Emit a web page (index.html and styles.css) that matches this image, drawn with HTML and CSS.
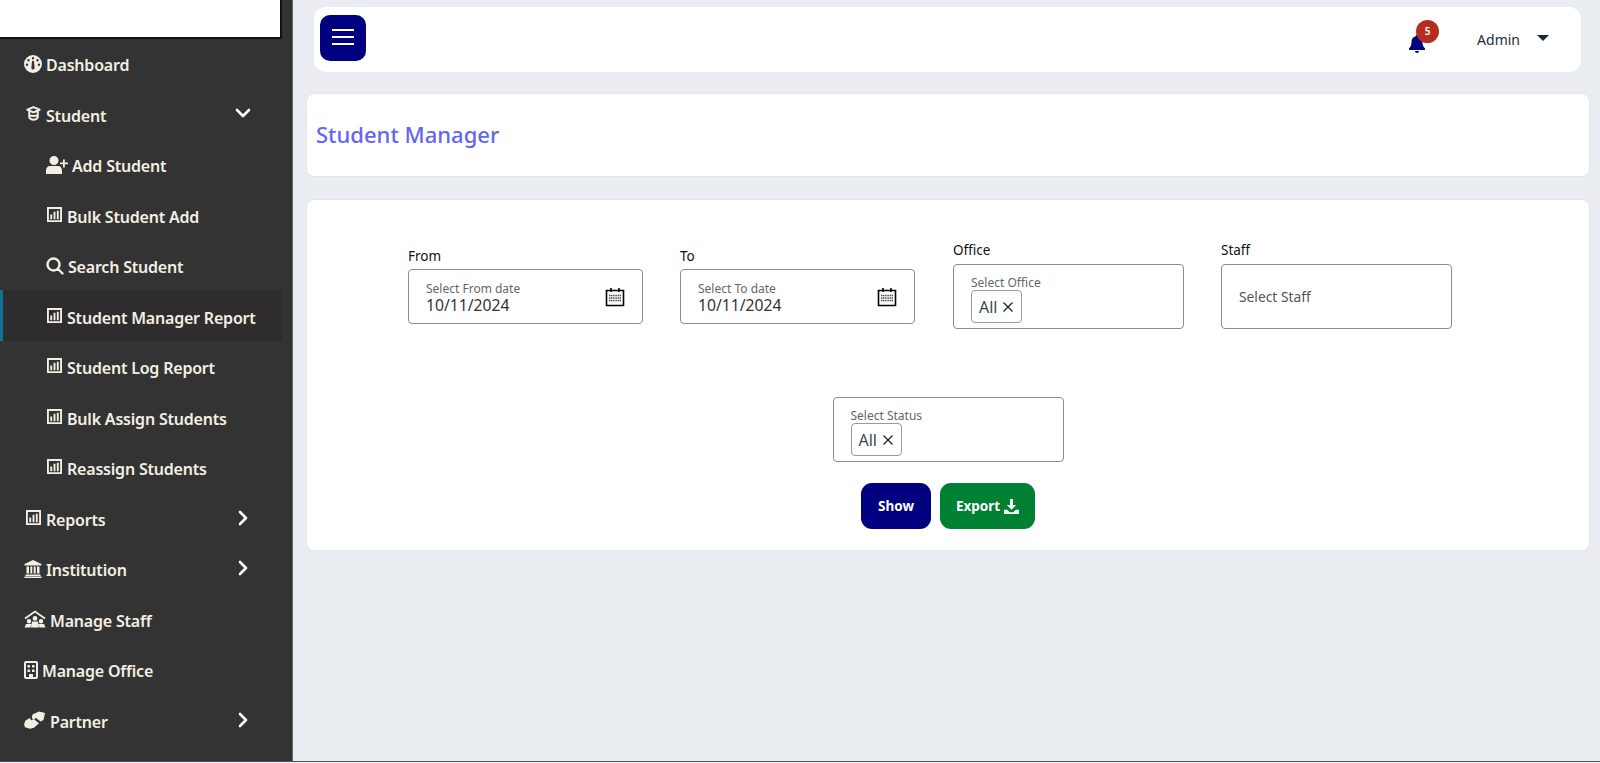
FILE: index.html
```html
<!DOCTYPE html>
<html lang="en">
<head>
    <meta charset="UTF-8">
    <title>Student Manager</title>
    <link rel="stylesheet" href="styles.css">
</head>
<body>
<svg class="defs" width="0" height="0">
    <symbol id="chart" viewBox="0 0 16 16">
        <path fill="currentColor" fill-rule="evenodd" d="M0 0h16v16H0zM2 2v12h12V2z"/>
        <path fill="currentColor" d="M3.5 8h2v5h-2zM7 5h2v8H7zM10.5 4h2v9h-2z"/>
    </symbol>
    <symbol id="right" viewBox="0 0 12 16">
        <path fill="none" stroke="currentColor" stroke-width="2.6" stroke-linecap="round" stroke-linejoin="round" d="M3 2l6 6-6 6"/>
    </symbol>
    <symbol id="calendar" viewBox="0 0 20 20">
        <path fill="none" stroke="#000" stroke-width="1.6" d="M1.5 3.5h17v15h-17zM6 1v4M14 1v4"/>
        <path fill="none" stroke="#444" stroke-width="1.7" stroke-dasharray="1.2 .6" d="M4 8.500h12M4 11h12M4 13.500h12"/>
    </symbol>
    <symbol id="close" viewBox="0 0 12 12">
        <path fill="none" stroke="#222" stroke-width="1.3" d="M1.500 1.500l9 9M10.500 1.500l-9 9"/>
    </symbol>
</svg>

<div class="layout">
    <aside class="sidebar">
        <div class="logo"></div>
        <nav class="menu">
            <a class="item">
                <svg class="icon icon-lg" viewBox="0 0 18 18"><path fill="currentColor" fill-rule="evenodd" d="M9 0a9 9 0 1 1 0 18A9 9 0 0 1 9 0zM8 6l-.6 7a1.600 1.600 0 1 0 3.200 0L10 6zM4.500 4a1.200 1.200 0 1 0 0 2.400 1.200 1.200 0 0 0 0-2.400zM9 2a1.200 1.200 0 1 0 0 2.400 1.200 1.200 0 0 0 0-2.400zM13.500 4a1.200 1.200 0 1 0 0 2.400 1.200 1.200 0 0 0 0-2.400zM3 8.500a1.200 1.200 0 1 0 0 2.400 1.200 1.200 0 0 0 0-2.400zM15 8.500a1.200 1.200 0 1 0 0 2.400 1.200 1.200 0 0 0 0-2.400z"/></svg>
                <span>Dashboard</span>
            </a>
            <a class="item">
                <svg class="icon icon-cap" viewBox="0 0 14 14"><path fill="none" stroke="currentColor" stroke-width="1.800" stroke-linejoin="round" d="M7 1L1.200 3.500 7 6l5.800-2.500zM3 5v5.500c0 1 2 2.300 4 2.300s4-1.300 4-2.300V5M3 8.500c2 1 6 1 8 0"/></svg>
                <span>Student</span>
                <svg class="chevron chevron-down" viewBox="0 0 16 12"><path fill="none" stroke="currentColor" stroke-width="2.600" stroke-linecap="round" stroke-linejoin="round" d="M2 3l6 6 6-6"/></svg>
            </a>
            <a class="item sub">
                <svg class="icon icon-add" viewBox="0 0 22 18"><path fill="currentColor" d="M8 0a4.500 4.500 0 1 1 0 9 4.500 4.500 0 0 1 0-9zM4 10h8c2.500 0 4 2 4 4.500V18H0v-3.500C0 12 1.500 10 4 10zM17 3.500h1.800V6.500H22v1.800h-3.200v3.200H17V8.300h-3V6.500h3z"/></svg>
                <span>Add Student</span>
            </a>
            <a class="item sub">
                <svg class="icon icon-chart"><use href="#chart"/></svg>
                <span>Bulk Student Add</span>
            </a>
            <a class="item sub">
                <svg class="icon icon-search" viewBox="0 0 18 18"><path fill="none" stroke="currentColor" stroke-width="2.400" stroke-linecap="round" d="M7.500 1.500a6 6 0 1 1 0 12 6 6 0 0 1 0-12zM12 12l4.500 4.500"/></svg>
                <span>Search Student</span>
            </a>
            <a class="item sub active">
                <svg class="icon icon-chart"><use href="#chart"/></svg>
                <span>Student Manager Report</span>
            </a>
            <a class="item sub">
                <svg class="icon icon-chart"><use href="#chart"/></svg>
                <span>Student Log Report</span>
            </a>
            <a class="item sub">
                <svg class="icon icon-chart"><use href="#chart"/></svg>
                <span>Bulk Assign Students</span>
            </a>
            <a class="item sub">
                <svg class="icon icon-chart"><use href="#chart"/></svg>
                <span>Reassign Students</span>
            </a>
            <a class="item">
                <svg class="icon icon-chart"><use href="#chart"/></svg>
                <span>Reports</span>
                <svg class="chevron"><use href="#right"/></svg>
            </a>
            <a class="item">
                <svg class="icon icon-lg" viewBox="0 0 18 18"><path fill="currentColor" d="M9 0l8.500 4v1.500H.5V4zM2.500 6.500h2.500v7H2.500zM6.300 6.500h2v7h-2zM9.700 6.500h2v7h-2zM13 6.500h2.500v7H13zM1.500 14.500h15V16h-15zM.5 16.500h17V18H.5z"/></svg>
                <span>Institution</span>
                <svg class="chevron"><use href="#right"/></svg>
            </a>
            <a class="item">
                <svg class="icon icon-staff" viewBox="0 0 22 18"><path fill="none" stroke="currentColor" stroke-width="1.800" d="M1 8.500L11 1.500l10 7"/><path fill="currentColor" d="M11 6a2.400 2.400 0 1 1 0 4.800A2.400 2.400 0 0 1 11 6zM8 11.500h6l1 6H7zM5 9a2.200 2.200 0 1 1 0 4.400A2.200 2.200 0 0 1 5 9zM2 14h5.500l-1 3.500H.5zM17 9a2.200 2.200 0 1 1 0 4.400 2.200 2.200 0 0 1 0-4.400zM14.500 14H20l1.500 3.500h-6z"/></svg>
                <span>Manage Staff</span>
            </a>
            <a class="item">
                <svg class="icon icon-office" viewBox="0 0 14 18"><path fill="currentColor" fill-rule="evenodd" d="M2 0h10a2 2 0 0 1 2 2v14a2 2 0 0 1-2 2H2a2 2 0 0 1-2-2V2a2 2 0 0 1 2-2zM2 2v14h3v-3h4v3h3V2zM3.500 4h2.500v2.500H3.500zM8 4h2.500v2.500H8zM3.500 8.500h2.500V11H3.500zM8 8.500h2.500V11H8z"/></svg>
                <span>Manage Office</span>
            </a>
            <a class="item">
                <svg class="icon icon-staff" viewBox="0 0 22 18"><path fill="currentColor" d="M8.500 3.500L15 .5l6 1.500-1.500 7-3 1.500-4.500-3.500-2.500 1.500-1.700-1.500zM1.500 9.500L6 7l1 2.200 3-1 5 4-5 4.500-4 1-5-1.500-1-3z"/></svg>
                <span>Partner</span>
                <svg class="chevron"><use href="#right"/></svg>
            </a>
        </nav>
    </aside>

    <main class="content">
        <header class="topbar">
            <button class="toggle">
                <svg viewBox="0 0 22 16" width="22" height="16"><path fill="none" stroke="#fff" stroke-width="2" d="M0 1h22M0 8h22M0 15h22"/></svg>
            </button>
            <div class="bell">
                <svg viewBox="0 0 16 18" width="16" height="18"><path fill="#000080" d="M8 0c.8 0 1.300.6 1.300 1.300C12 2 13.500 4.300 13.500 7c0 3.500 1 5 2.500 6.500V15H0v-1.500C1.500 12 2.500 10.500 2.500 7c0-2.700 1.500-5 4.200-5.700C6.700.6 7.200 0 8 0zM6 16h4a2 2 0 0 1-4 0z"/></svg>
                <span class="badge">5</span>
            </div>
            <div class="user">
                <span>Admin</span>
                <span class="caret"></span>
            </div>
        </header>

        <section class="card title-card">
            <h1>Student Manager</h1>
        </section>

        <section class="card form-card">
            <div class="filters">
                <div class="field field-date">
                    <label>From</label>
                    <div class="box box-date">
                        <div>
                            <small>Select From date</small>
                            <p>10/11/2024</p>
                        </div>
                        <svg class="cal"><use href="#calendar"/></svg>
                    </div>
                </div>
                <div class="field field-date field-to">
                    <label>To</label>
                    <div class="box box-date">
                        <div>
                            <small>Select To date</small>
                            <p>10/11/2024</p>
                        </div>
                        <svg class="cal"><use href="#calendar"/></svg>
                    </div>
                </div>
                <div class="field field-select">
                    <label>Office</label>
                    <div class="box box-select">
                        <small>Select Office</small>
                        <span class="chip">All <svg class="chip-x"><use href="#close"/></svg></span>
                    </div>
                </div>
                <div class="field field-staff">
                    <label>Staff</label>
                    <div class="box box-staff">Select Staff</div>
                </div>
            </div>

            <div class="status-row">
                <div class="field field-select">
                    <div class="box box-select">
                        <small>Select Status</small>
                        <span class="chip">All <svg class="chip-x"><use href="#close"/></svg></span>
                    </div>
                </div>
            </div>

            <div class="actions">
                <button class="btn btn-show">Show</button>
                <button class="btn btn-export">Export
                    <svg viewBox="0 0 16 16" width="15" height="15"><path fill="#fff" d="M6.500 0h3v6.500H13L8 11.500 3 6.500h3.500zM0 11.500h3.500L6 14h4l2.500-2.500H16V16H0z"/></svg>
                </button>
            </div>
        </section>
    </main>
</div>
</body>
</html>
```

FILE: styles.css
```css
* {
    box-sizing: border-box;
}
html, body {
    height: 100%;
}
body {
    margin: 0;
    overflow: hidden;
    background: #e9ecf1;
    font-family: "Noto Sans", "Open Sans", sans-serif;
    color: #212529;
}
.defs {
    position: absolute;
}
.layout {
    display: flex;
    height: 762px;
    border-bottom: 1px solid #555;
}
.sidebar {
    width: 293px;
    flex-shrink: 0;
    background: #333;
    border-right: 1px solid #666;
}
.logo {
    width: 282px;
    height: 39px;
    background: #fff;
    border-right: 2px solid #111;
    border-bottom: 2px solid #111;
}
.menu {
    display: flex;
    flex-direction: column;
    margin-top: -1.5px;
}
.item {
    display: flex;
    align-items: center;
    width: 282px;
    height: 50.5px;
    padding-top: 5px;
    padding-left: 24px;
    color: #f3efe4;
    font-size: 16px;
    font-weight: 600;
    letter-spacing: -0.2px;
    white-space: nowrap;
}
.item.sub {
    padding-left: 46px;
}
.item.active {
    background: #2e2c2c;
    border-left: 3px solid #0f7197;
    padding-left: 43px;
}
.icon {
    flex-shrink: 0;
    margin-right: 4px;
    margin-top: -3px;
}
.icon-lg {
    width: 18px;
    height: 18px;
}
.icon-cap {
    width: 15px;
    height: 15px;
    margin: -5px 5px 0 2px;
}
.icon-add {
    width: 22px;
    height: 18px;
    margin-right: 4px;
}
.icon-chart {
    width: 15px;
    height: 15px;
    margin: -5px 5px 0 1px;
}
.item:not(.sub) .icon-chart {
    margin: -5px 5px 0 2px;
}
.icon-search {
    width: 18px;
    height: 18px;
    margin-right: 4px;
}
.icon-staff {
    width: 22px;
    height: 18px;
}
.icon-office {
    width: 14px;
    height: 18px;
}
.chevron {
    width: 12px;
    height: 16px;
    margin-left: auto;
    margin-right: 33px;
    margin-top: -4px;
    color: #fff;
}
.chevron-down {
    width: 16px;
    height: 12px;
    margin-right: 31px;
    margin-top: -5px;
}
.content {
    flex: 1;
    padding: 7px 10px 0 13px;
}
.topbar {
    display: flex;
    align-items: center;
    height: 65px;
    margin: 0 9px 0 8px;
    padding-left: 6px;
    background: #fff;
    border-radius: 12px;
}
.toggle {
    display: flex;
    align-items: center;
    justify-content: center;
    width: 46px;
    height: 46px;
    padding: 0 0 2px;
    margin-top: -3px;
    background: #000080;
    border: none;
    border-radius: 10px;
}
.bell {
    position: relative;
    margin-left: auto;
    width: 16px;
    height: 18px;
    margin-top: 8px;
    margin-right: 52px;
}
.badge {
    position: absolute;
    top: -15px;
    left: 7px;
    width: 23px;
    height: 23px;
    line-height: 23px;
    border-radius: 50%;
    background: #b52d1c;
    color: #fff;
    font-size: 10px;
    font-weight: 600;
    text-align: center;
}
.user {
    display: flex;
    align-items: center;
    margin-right: 32px;
    font-size: 14px;
    color: #1d2b3a;
}
.caret {
    width: 0;
    height: 0;
    margin-left: 17px;
    margin-top: -3px;
    border-left: 6px solid transparent;
    border-right: 6px solid transparent;
    border-top: 6px solid #16283a;
}
.card {
    background: #fff;
    border: 1px solid #e2e5ea;
    border-radius: 8px;
}
.title-card {
    height: 84px;
    margin-top: 21px;
    display: flex;
    align-items: center;
    padding: 0 0 3px 9px;
}
h1 {
    margin: 0;
    font-size: 22px;
    font-weight: 500;
    color: #6366f1;
}
.form-card {
    height: 352px;
    margin-top: 22px;
    padding-top: 41px;
}
.filters {
    display: flex;
    align-items: flex-start;
    padding-left: 101px;
}
.field label {
    display: block;
    font-size: 13.5px;
    line-height: 18px;
    margin-bottom: 5px;
    color: #111;
}
.field-date {
    width: 235px;
    margin-right: 37px;
    padding-top: 5px;
}
.field-date label {
    position: relative;
    top: 1px;
}
.field-to {
    margin-right: 38px;
}
.field-select,
.field-staff {
    width: 231px;
    margin-right: 37px;
}
.box {
    border: 1px solid #8c8c8c;
    border-radius: 4px;
    background: #fff;
}
.box small {
    display: block;
    font-size: 12px;
    line-height: 14px;
    color: #666;
}
.box-date {
    display: flex;
    align-items: center;
    justify-content: space-between;
    height: 55px;
    padding: 3px 17px 0 17px;
}
.box-date small {
    padding-top: 1px;
}
.box-date p {
    margin: -1px 0 0;
    font-size: 15.7px;
    line-height: 20px;
    color: #333;
}
.cal {
    width: 20px;
    height: 20px;
    margin-top: -2px;
}
.box-select {
    height: 65px;
    padding: 11px 17px 0 17px;
}
.chip {
    display: inline-flex;
    align-items: center;
    gap: 5px;
    height: 33px;
    padding: 0 7px;
    border: 1px solid #999;
    border-radius: 4px;
    font-size: 16px;
    color: #37474f;
}
.chip-x {
    width: 12px;
    height: 12px;
}
.box-staff {
    display: flex;
    align-items: center;
    height: 65px;
    padding-left: 17px;
    font-size: 13.8px;
    color: #555;
}
.status-row {
    display: flex;
    justify-content: center;
    margin-top: 68px;
}
.status-row .field-select {
    margin: 0;
}
.actions {
    display: flex;
    justify-content: center;
    gap: 9px;
    margin-top: 21px;
}
.btn {
    display: flex;
    align-items: center;
    justify-content: center;
    gap: 4px;
    height: 46px;
    border: none;
    border-radius: 11px;
    color: #fff;
    font-family: inherit;
    font-size: 13.5px;
    font-weight: 700;
}
.btn-show {
    width: 70px;
    background: #000080;
}
.btn-export {
    width: 95px;
    background: #008033;
}
```
